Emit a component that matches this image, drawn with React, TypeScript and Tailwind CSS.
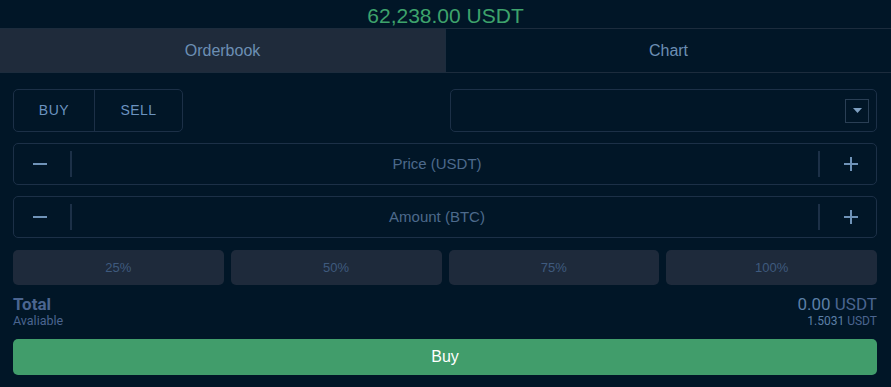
import { useState } from "react";

const percents = ["25%", "50%", "75%", "100%"];

function StepInput({ label }: { label: string }) {
  return (
    <div className="flex h-[42px] items-center rounded-[5px] border border-[#1c3047]">
      <button className="flex h-full w-[56px] items-center justify-start pl-[18px] text-[#6f93b8]">
        <svg width="16" height="16" viewBox="0 0 16 16">
          <path d="M1 8h14" stroke="currentColor" strokeWidth="2" />
        </svg>
      </button>
      <div className="h-[26px] w-[2px] bg-[#1c3047]" />
      <div className="flex-1 pr-[16px] text-center text-[15px] text-[#4d6a8c]">{label}</div>
      <div className="h-[26px] w-[2px] bg-[#1c3047]" />
      <button className="flex h-full w-[56px] items-center justify-end pr-[17px] text-[#6f93b8]">
        <svg width="16" height="16" viewBox="0 0 16 16">
          <path d="M1 8h14M8 1v14" stroke="currentColor" strokeWidth="2" />
        </svg>
      </button>
    </div>
  );
}

export default function App() {
  const [tab, setTab] = useState<"orderbook" | "chart">("orderbook");
  const [side, setSide] = useState<"buy" | "sell">("buy");

  return (
    <div className="min-h-[387px] w-full bg-[#011627] font-['Liberation_Sans',Arial,sans-serif]">
      <div className="flex h-[28px] items-center justify-center pt-[2px] text-[21px] leading-none text-[#3ea36c]">
        62,238.00 USDT
      </div>

      <div className="flex h-[45px] border-y border-[#1c2c3d]">
        <button
          onClick={() => setTab("orderbook")}
          className={`flex-1 border-r border-[#1c2c3d] text-[16px] text-[#6c8fb4] ${tab === "orderbook" ? "bg-[#1f2b3b]" : ""}`}
        >
          Orderbook
        </button>
        <button
          onClick={() => setTab("chart")}
          className={`flex-1 text-[16px] text-[#6c8fb4] ${tab === "chart" ? "bg-[#1f2b3b]" : ""}`}
        >
          Chart
        </button>
      </div>

      <div className="flex flex-col pl-[13px] pr-[14px] pt-[16px]">
        <div className="flex items-center justify-between">
          <div className="flex h-[43px] w-[170px] rounded-[5px] border border-[#1c3047]">
            <button
              onClick={() => setSide("buy")}
              className={`w-[81px] border-r border-[#1c3047] text-[14px] tracking-[0.5px] text-[#6b93c0] ${side === "buy" ? "" : ""}`}
            >
              BUY
            </button>
            <button
              onClick={() => setSide("sell")}
              className="flex-1 text-[14px] tracking-[0.5px] text-[#6b93c0]"
            >
              SELL
            </button>
          </div>
          <div className="flex h-[43px] w-[427px] items-center justify-end rounded-[5px] border border-[#1c3047] pr-[7px]">
            <div className="flex h-[24px] w-[24px] items-center justify-center border border-[#2a3f55]">
              <svg width="9" height="5" viewBox="0 0 9 5">
                <path d="M0 0h9L4.5 5z" fill="#7e9fc0" />
              </svg>
            </div>
          </div>
        </div>

        <div className="mt-[11px] flex flex-col gap-[11px]">
          <StepInput label="Price (USDT)" />
          <StepInput label="Amount (BTC)" />
        </div>

        <div className="mt-[12px] grid grid-cols-4 gap-[7px]">
          {percents.map((p) => (
            <button
              key={p}
              className="h-[35px] rounded-[5px] bg-[#1e2a3b] text-[13px] text-[#3f5a7e]"
            >
              {p}
            </button>
          ))}
        </div>

        <div className="mt-[9px] flex items-start justify-between font-['Roboto',sans-serif]">
          <div className="flex flex-col">
            <span className="text-[17px] font-bold leading-[20px] text-[#4b6590]">Total</span>
            <span className="text-[12.5px] leading-[14px] text-[#4b6590]">Avaliable</span>
          </div>
          <div className="flex flex-col items-end">
            <span className="text-[17px] leading-[20px] text-[#5c7fa6]">
              0.00 <span className="text-[#4b6590]">USDT</span>
            </span>
            <span className="text-[12px] leading-[14px] text-[#5c7fa6]">
              1.5031 <span className="text-[#4b6590]">USDT</span>
            </span>
          </div>
        </div>

        <button className="mt-[11px] h-[36px] w-full rounded-[5px] bg-[#419d6b] text-[16px] text-white">
          Buy
        </button>
      </div>
    </div>
  );
}
